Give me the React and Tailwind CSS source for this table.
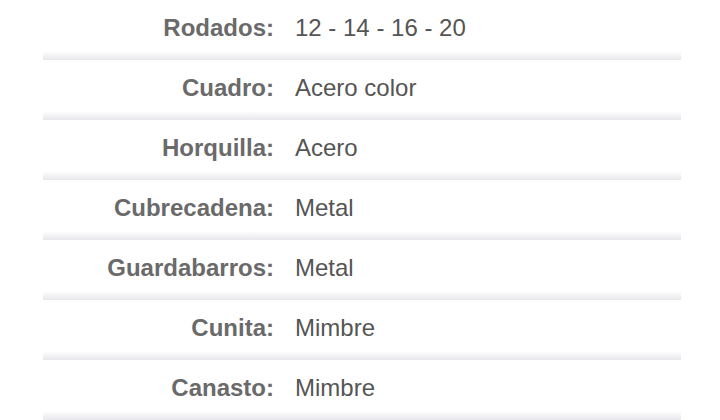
export default function App() {
  const rows = [
    ["Rodados:", "12 - 14 - 16 - 20"],
    ["Cuadro:", "Acero color"],
    ["Horquilla:", "Acero"],
    ["Cubrecadena:", "Metal"],
    ["Guardabarros:", "Metal"],
    ["Cunita:", "Mimbre"],
    ["Canasto:", "Mimbre"],
  ];
  return (
    <div className="w-[720px] h-[420px] bg-white overflow-hidden" style={{ fontFamily: '"Liberation Sans", Arial, sans-serif' }}>
      <div className="ml-[43px] w-[638px]">
        {rows.map(([k, v]) => (
          <div key={k} className="h-[60px] flex flex-col">
            <div className="flex-1 flex items-center pt-[5px]">
              <div className="w-[231px] text-right font-bold text-[24px] leading-[28px] text-[#6a6a6a]">{k}</div>
              <div className="ml-[21px] text-[24px] leading-[28px] text-[#555555]">{v}</div>
            </div>
            <div className="h-[9px] bg-gradient-to-b from-white to-[#e8e8ec]" />
          </div>
        ))}
      </div>
    </div>
  );
}
